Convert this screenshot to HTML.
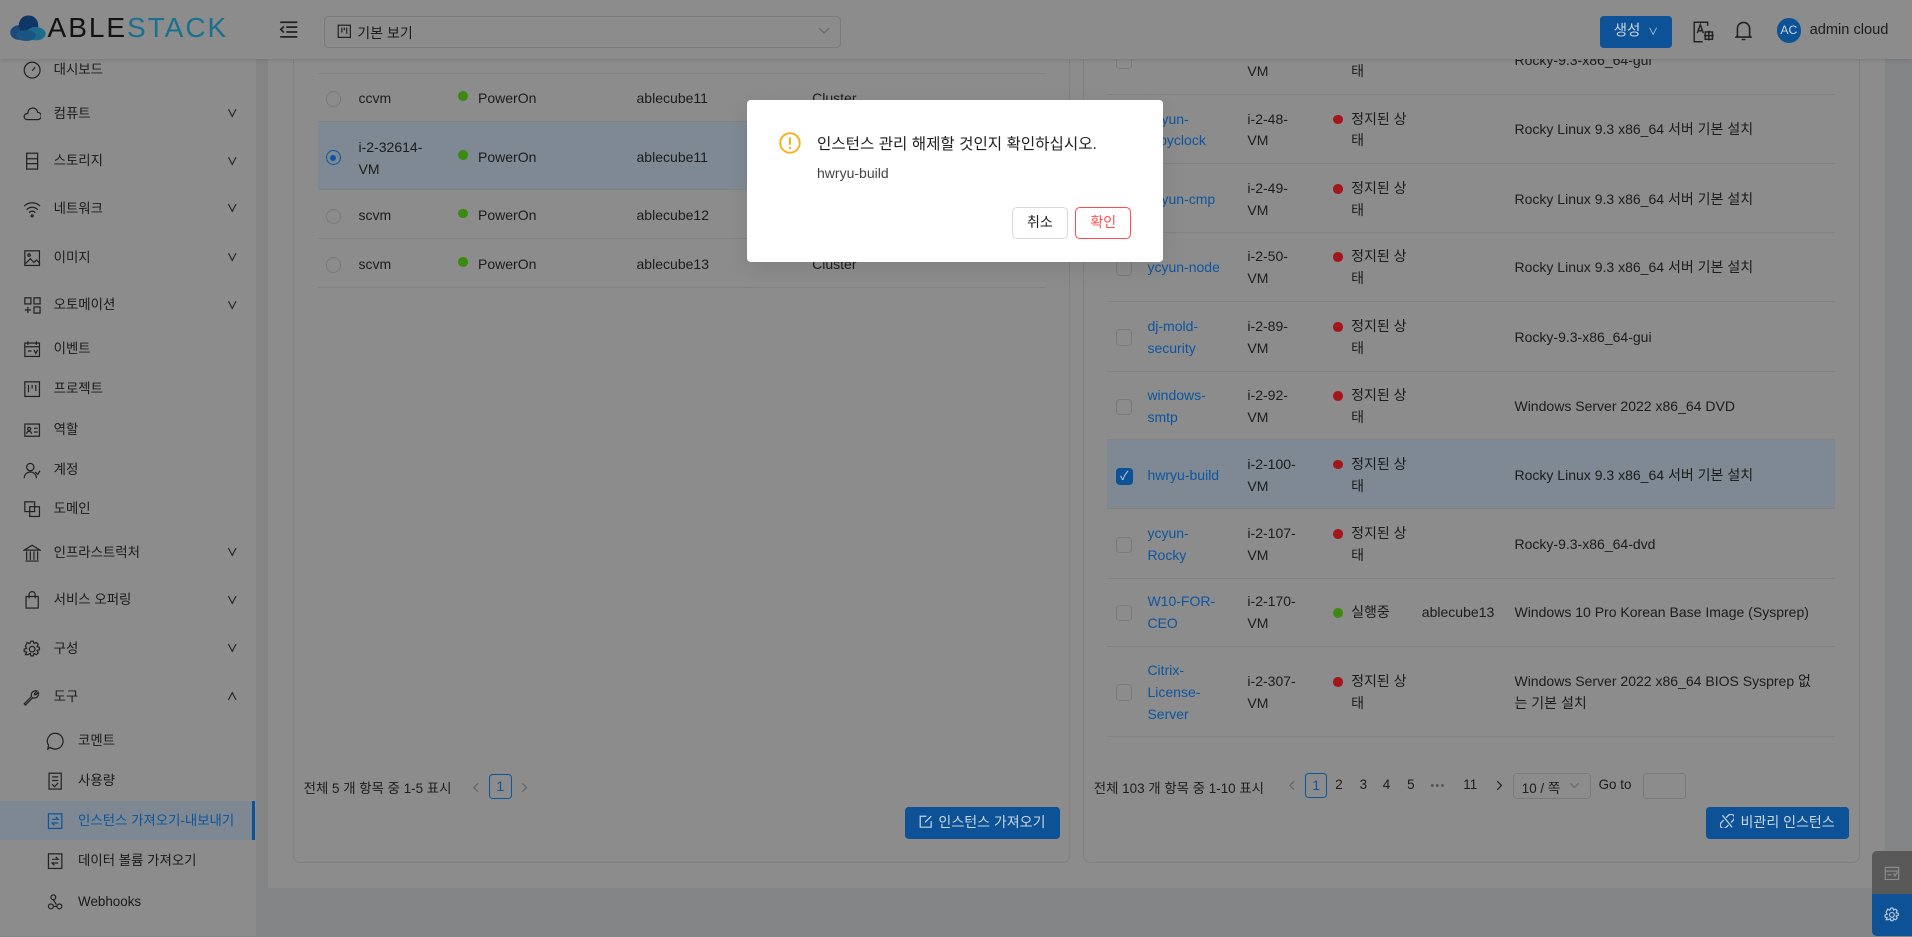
<!DOCTYPE html>
<html><head><meta charset="utf-8">
<style>
html,body{margin:0;padding:0;}
body{width:1568px;height:768px;zoom:1.219388;position:relative;overflow:hidden;background:#838486;font-family:"Liberation Sans","Noto Sans CJK KR",sans-serif;font-size:11.5px;color:#1c1c1c;}
.a{position:absolute;white-space:nowrap;}
.hdr{position:absolute;left:0;top:0;width:1568px;height:48px;background:#8c8c8c;box-shadow:0 1px 3px rgba(0,0,0,.12);z-index:5;}
.side{position:absolute;left:0;top:48px;width:210px;height:720px;background:#8c8c8c;z-index:4;}
.mi{position:absolute;left:0;width:210px;height:32px;line-height:32px;}
.mi .t{position:absolute;left:44px;top:0;font-size:11px;color:#1a1a1a;}
.mi svg{position:absolute;left:19px;top:9px;}
.mi .ch{position:absolute;left:186px;top:1px;font-size:9px;font-weight:bold;color:#222;}
.sub .t{left:64px;}
.sub svg{left:38px;}
.panel{position:absolute;left:220px;top:48px;width:1326px;height:680px;background:#8c8c8c;}
.card{position:absolute;top:0;height:659px;border:1px solid #7f7f7f;border-top:none;border-radius:0 0 6px 6px;background:#8c8c8c;}
.row{position:absolute;border-bottom:1px solid #818181;}
.sel{background:#7e8993;}
.dot{position:absolute;width:8px;height:8px;border-radius:50%;}
.red{background:#a3161c;}.grn{background:#3c8a12;}
.lk{color:#0d559f;}
.btn{position:absolute;background:#0d5296;color:#c9d5e3;border-radius:3px;text-align:center;font-size:11.5px;}
.cb{position:absolute;width:12px;height:12px;border:1px solid #7a7a7a;border-radius:3px;background:#8c8c8c;}
.overlay-dlg{position:absolute;left:613px;top:82px;width:341px;height:133px;background:#fff;border-radius:3px;z-index:10;box-shadow:0 6px 16px rgba(0,0,0,.08);}
.pg{position:absolute;top:637px;font-size:11px;color:#1c1c1c;}
#lt .a,#rt .a{margin-top:1px;}
</style></head><body>

<!-- header -->
<div class="hdr">
  <svg class="a" style="left:7px;top:11px" width="32" height="24" viewBox="0 0 32 24">
    <ellipse cx="8" cy="16" rx="7" ry="6" fill="#1d4a78"/>
    <circle cx="16" cy="10" r="8" fill="#0e3766"/>
    <ellipse cx="22" cy="17" rx="8" ry="5.5" fill="#1c6b8c"/>
    <ellipse cx="14" cy="18.5" rx="8" ry="4.5" fill="#1a5582"/>
  </svg>
  <div class="a" style="left:39px;top:10px;font-size:23px;letter-spacing:1.6px;line-height:26px;"><span style="color:#121212">ABLE</span><span style="color:#19718e">STACK</span></div>
  <svg class="a" style="left:229px;top:17px" width="16" height="14" viewBox="0 0 16 14" stroke="#222" stroke-width="1.4" fill="none"><path d="M1 1h14M6 5h9M6 9h9M1 13h14M4 4.5L1.5 7 4 9.5"/></svg>
  <div class="a" style="left:266px;top:13px;width:422px;height:25px;border:1px solid #7a7a7a;border-radius:4px;background:#8c8c8c;"></div>
  <svg class="a" style="left:276px;top:20px" width="12" height="12" viewBox="0 0 12 12" stroke="#222" fill="none"><rect x="1" y="1" width="10" height="10"/><path d="M4 3v4M6 3v2M8 3v5"/></svg>
  <div class="a" style="left:293px;top:19px;color:#1c1c1c;font-size:11.5px;">기본 보기</div>
  <svg class="a" style="left:671px;top:22px" width="10" height="7" viewBox="0 0 10 7" stroke="#6b6b6b" fill="none"><path d="M1 1l4 4 4-4"/></svg>
  <div class="btn" style="left:1312px;top:13px;width:59px;height:26px;line-height:26px;font-size:12px">생성 <span style="font-size:8px;margin-left:3px">∨</span></div>
  <svg class="a" style="left:1388px;top:17px" width="18" height="18" viewBox="0 0 18 18" stroke="#222" fill="none" stroke-width="1.2"><path d="M12 4V1H1v16h7"/><path d="M3.5 10L6 3l2.5 7M4.4 8h3.2"/><rect x="10" y="9" width="6" height="6"/><path d="M13 8v8M9 12h8"/></svg>
  <svg class="a" style="left:1423px;top:16px" width="14" height="18" viewBox="0 0 14 18" stroke="#222" fill="none" stroke-width="1.3"><path d="M2 13V7a5 5 0 0 1 10 0v6l1 1H1z M5.5 16h3"/></svg>
  <div class="a" style="left:1457px;top:15px;width:20px;height:20px;border-radius:50%;background:#0d5296;color:#c9d5e3;font-size:10px;line-height:20px;text-align:center;">AC</div>
  <div class="a" style="left:1484px;top:18px;font-size:12px;color:#1c1c1c;">admin cloud</div>
</div>

<!-- sidebar -->
<div class="side">
  <div class="mi" style="top:-7px"><svg width="15" height="15" viewBox="0 0 15 15" stroke="#222" fill="none"><circle cx="7.5" cy="7.5" r="6.5"/><path d="M7.5 8l2.5-3"/></svg><span class="t">대시보드</span></div>
  <div class="mi" style="top:29px"><svg width="15" height="15" viewBox="0 0 15 15" stroke="#222" fill="none"><path d="M3 12h9a3 3 0 0 0 0-6 4 4 0 0 0-8 1 2.5 2.5 0 0 0-1 5z"/></svg><span class="t">컴퓨트</span><span class="ch">∨</span></div>
  <div class="mi" style="top:68px"><svg width="15" height="15" viewBox="0 0 15 15" stroke="#222" fill="none"><rect x="3" y="1" width="9" height="13"/><path d="M3 5.5h9M3 9.5h9"/></svg><span class="t">스토리지</span><span class="ch">∨</span></div>
  <div class="mi" style="top:107px"><svg width="15" height="15" viewBox="0 0 15 15" stroke="#222" fill="none"><path d="M1 5a9 9 0 0 1 13 0M3 8a6 6 0 0 1 9 0M5 10.5a3 3 0 0 1 5 0"/><circle cx="7.5" cy="13" r=".8"/></svg><span class="t">네트워크</span><span class="ch">∨</span></div>
  <div class="mi" style="top:147px"><svg width="15" height="15" viewBox="0 0 15 15" stroke="#222" fill="none"><rect x="1.5" y="1.5" width="12" height="12"/><path d="M2 12l4-4 3 3 2-2 3 3"/><circle cx="5" cy="5" r="1"/></svg><span class="t">이미지</span><span class="ch">∨</span></div>
  <div class="mi" style="top:186px"><svg width="15" height="15" viewBox="0 0 15 15" stroke="#222" fill="none"><rect x="1.5" y="1.5" width="5" height="5"/><rect x="9" y="1.5" width="5" height="5"/><rect x="9" y="9" width="5" height="5"/><path d="M4 9v5M1.5 11.5h5"/></svg><span class="t">오토메이션</span><span class="ch">∨</span></div>
  <div class="mi" style="top:222px"><svg width="15" height="15" viewBox="0 0 15 15" stroke="#222" fill="none"><rect x="1.5" y="2.5" width="12" height="11"/><path d="M1.5 5.5h12M4 1v3M11 1v3M4 9h3M9 8l1.5 3 1.5-3"/></svg><span class="t">이벤트</span></div>
  <div class="mi" style="top:255px"><svg width="15" height="15" viewBox="0 0 15 15" stroke="#222" fill="none"><rect x="1.5" y="1.5" width="12" height="12"/><path d="M4.5 4v6M7.5 4v3M10.5 4v5"/></svg><span class="t">프로젝트</span></div>
  <div class="mi" style="top:288px"><svg width="15" height="15" viewBox="0 0 15 15" stroke="#222" fill="none"><rect x="1.5" y="2.5" width="12" height="10"/><circle cx="5" cy="6.5" r="1.3"/><path d="M3 10.5a2 2 0 0 1 4 0M9 6h3M9 9h3"/></svg><span class="t">역할</span></div>
  <div class="mi" style="top:321px"><svg width="15" height="15" viewBox="0 0 15 15" stroke="#222" fill="none"><circle cx="6" cy="5" r="3"/><path d="M1 14a5 5 0 0 1 10 0M10 9l2 2 2-3"/></svg><span class="t">계정</span></div>
  <div class="mi" style="top:353px"><svg width="15" height="15" viewBox="0 0 15 15" stroke="#222" fill="none"><rect x="1.5" y="1.5" width="8" height="8"/><rect x="5.5" y="5.5" width="8" height="8"/></svg><span class="t">도메인</span></div>
  <div class="mi" style="top:389px"><svg width="15" height="15" viewBox="0 0 15 15" stroke="#222" fill="none"><path d="M1 5l6.5-4 6.5 4zM2 14h11M3 6v7M6 6v7M9 6v7M12 6v7"/></svg><span class="t">인프라스트럭처</span><span class="ch">∨</span></div>
  <div class="mi" style="top:428px"><svg width="15" height="15" viewBox="0 0 15 15" stroke="#222" fill="none"><rect x="2.5" y="4.5" width="10" height="9.5"/><path d="M5 6V3a2.5 2.5 0 0 1 5 0v3"/></svg><span class="t">서비스 오퍼링</span><span class="ch">∨</span></div>
  <div class="mi" style="top:468px"><svg width="15" height="15" viewBox="0 0 15 15" stroke="#222" fill="none"><circle cx="7.5" cy="7.5" r="2.3"/><path d="M6.5 1h2l.5 2 2-1 1.5 1.5-1 2 2 .5v2l-2 .5 1 2-1.5 1.5-2-1-.5 2h-2l-.5-2-2 1L2 12l1-2-2-.5v-2l2-.5-1-2L3.5 2l2 1z"/></svg><span class="t">구성</span><span class="ch">∨</span></div>
  <div class="mi" style="top:507px"><svg width="15" height="15" viewBox="0 0 15 15" stroke="#222" fill="none"><path d="M2 14l6-6a3.5 3.5 0 0 0 4.5-4.5L10.5 5.5 9.5 5.5 9.5 4.5 11.5 2.5A3.5 3.5 0 0 0 7 7l-6 6z"/></svg><span class="t">도구</span><span class="ch">∧</span></div>
  <div class="mi sub" style="top:543px"><svg width="15" height="15" viewBox="0 0 15 15" stroke="#222" fill="none"><path d="M7.5 1a6.5 6.5 0 1 1-4 11.6L1.5 14l.6-3A6.5 6.5 0 0 1 7.5 1z"/><path d="M4.5 7.5h.1M7.5 7.5h.1M10.5 7.5h.1" stroke-width="1.5"/></svg><span class="t">코멘트</span></div>
  <div class="mi sub" style="top:576px"><svg width="15" height="15" viewBox="0 0 15 15" stroke="#222" fill="none"><rect x="2.5" y="1" width="10" height="13"/><path d="M5 4h5M5 7h5M5 10l2 2 3-3"/></svg><span class="t">사용량</span></div>
  <div class="mi sub" style="top:609px;background:#7d8893;border-right:3px solid #0d5296;width:207px;"><svg width="15" height="15" viewBox="0 0 15 15" stroke="#0d559f" fill="none"><rect x="2" y="1.5" width="11" height="12"/><path d="M5 6h5l-2-2M10 9H5l2 2"/></svg><span class="t" style="color:#0d559f">인스턴스 가져오기-내보내기</span></div>
  <div class="mi sub" style="top:642px"><svg width="15" height="15" viewBox="0 0 15 15" stroke="#222" fill="none"><rect x="2" y="1.5" width="11" height="12"/><path d="M5 6h5l-2-2M10 9H5l2 2"/></svg><span class="t">데이터 볼륨 가져오기</span></div>
  <div class="mi sub" style="top:675px"><svg width="15" height="15" viewBox="0 0 15 15" stroke="#222" fill="none"><circle cx="6" cy="3.5" r="2"/><circle cx="4" cy="11" r="2"/><circle cx="11" cy="11" r="2"/><path d="M6 5.5l2.5 4M6 11h3"/></svg><span class="t">Webhooks</span></div>
</div>

<!-- content panel -->
<div class="panel">
  <div class="card" style="left:20px;width:636px;">
    <div class="a" style="left:20px;top:12px;width:597px;border-top:1px solid #818181"></div>
    <div class="row" style="left:20px;top:12px;width:597px;height:39px;"></div>
    <div class="row sel" style="left:20px;top:52px;width:597px;height:55px;"></div>
    <div class="row" style="left:20px;top:108px;width:597px;height:39px;"></div>
    <div class="row" style="left:20px;top:148px;width:597px;height:39px;"></div>
  </div>
  <div class="card" style="left:668px;width:636px;"></div>
</div>

<div id="lt">
  <div class="a" style="left:267px;top:74px;width:11px;height:11px;border:1px solid #7a7a7a;border-radius:50%"></div>
  <div class="a" style="left:294px;top:73px;">ccvm</div>
  <div class="dot grn" style="left:376px;top:75px"></div><div class="a" style="left:392px;top:73px;">PowerOn</div>
  <div class="a" style="left:522px;top:73px;">ablecube11</div>
  <div class="a" style="left:666px;top:73px;">Cluster</div>

  <div class="a" style="left:267px;top:122px;width:11px;height:11px;border:1px solid #0d559f;border-radius:50%;"><div style="margin:3px;width:5px;height:5px;border-radius:50%;background:#0d559f"></div></div>
  <div class="a" style="left:294px;top:111px;line-height:18px;">i-2-32614-<br>VM</div>
  <div class="dot grn" style="left:376px;top:123px"></div><div class="a" style="left:392px;top:121px;">PowerOn</div>
  <div class="a" style="left:522px;top:121px;">ablecube11</div>

  <div class="a" style="left:267px;top:170px;width:11px;height:11px;border:1px solid #7a7a7a;border-radius:50%"></div>
  <div class="a" style="left:294px;top:169px;">scvm</div>
  <div class="dot grn" style="left:376px;top:171px"></div><div class="a" style="left:392px;top:169px;">PowerOn</div>
  <div class="a" style="left:522px;top:169px;">ablecube12</div>

  <div class="a" style="left:267px;top:210px;width:11px;height:11px;border:1px solid #7a7a7a;border-radius:50%"></div>
  <div class="a" style="left:294px;top:209px;">scvm</div>
  <div class="dot grn" style="left:376px;top:211px"></div><div class="a" style="left:392px;top:209px;">PowerOn</div>
  <div class="a" style="left:522px;top:209px;">ablecube13</div>
  <div class="a" style="left:666px;top:209px;">Cluster</div>

  <div class="pg" style="left:249px;">전체 5 개 항목 중 1-5 표시</div>
  <svg class="a" style="left:387px;top:640px" width="6" height="9" viewBox="0 0 6 9" stroke="#666" fill="none"><path d="M5 1L1.5 4.5 5 8"/></svg>
  <div class="a" style="left:401px;top:634px;width:17px;height:19px;border:1px solid #0d559f;border-radius:3px;text-align:center;line-height:19px;color:#0d559f;">1</div>
  <svg class="a" style="left:427px;top:640px" width="6" height="9" viewBox="0 0 6 9" stroke="#666" fill="none"><path d="M1 1l3.5 3.5L1 8"/></svg>
  <div class="btn" style="left:742px;top:662px;width:127px;height:26px;line-height:26px;">
    <svg width="11" height="11" viewBox="0 0 11 11" stroke="#c9d5e3" fill="none" style="vertical-align:-1px;margin-right:5px"><path d="M6 1H1v9h9V5M5 6l5-5"/></svg>인스턴스 가져오기</div>
</div>

<div class="row" style="left:908px;top:21px;width:597px;height:56px;"></div>
<div class="row" style="left:908px;top:78px;width:597px;height:56px;"></div>
<div class="row" style="left:908px;top:135px;width:597px;height:55px;"></div>
<div class="row" style="left:908px;top:191px;width:597px;height:56px;"></div>
<div class="row" style="left:908px;top:248px;width:597px;height:56px;"></div>
<div class="row" style="left:908px;top:305px;width:597px;height:55px;"></div>
<div class="row sel" style="left:908px;top:361px;width:597px;height:56px;"></div>
<div class="row" style="left:908px;top:418px;width:597px;height:56px;"></div>
<div class="row" style="left:908px;top:475px;width:597px;height:55px;"></div>
<div class="row" style="left:908px;top:531px;width:597px;height:73px;"></div>

<div id="rt" style="line-height:18px;">
  <div class="cb" style="left:915px;top:43px"></div>
  <div class="a lk" style="left:941px;top:31px;">dj-build</div>
  <div class="a" style="left:1023px;top:31px;">i-2-46-<br>VM</div>
  <div class="dot red" style="left:1093px;top:37px"></div><div class="a" style="left:1108px;top:31px;">정지된 상<br>태</div>
  <div class="a" style="left:1242px;top:40px;">Rocky-9.3-x86_64-gui</div>

  <div class="cb" style="left:915px;top:100px"></div>
  <div class="a lk" style="left:941px;top:88px;">ycyun-<br>ntpyclock</div>
  <div class="a" style="left:1023px;top:88px;">i-2-48-<br>VM</div>
  <div class="dot red" style="left:1093px;top:94px"></div><div class="a" style="left:1108px;top:88px;">정지된 상<br>태</div>
  <div class="a" style="left:1242px;top:97px;">Rocky Linux 9.3 x86_64 서버 기본 설치</div>

  <div class="cb" style="left:915px;top:157px"></div>
  <div class="a lk" style="left:941px;top:154px;">ycyun-cmp</div>
  <div class="a" style="left:1023px;top:145px;">i-2-49-<br>VM</div>
  <div class="dot red" style="left:1093px;top:151px"></div><div class="a" style="left:1108px;top:145px;">정지된 상<br>태</div>
  <div class="a" style="left:1242px;top:154px;">Rocky Linux 9.3 x86_64 서버 기본 설치</div>

  <div class="cb" style="left:915px;top:213px"></div>
  <div class="a lk" style="left:941px;top:210px;">ycyun-node</div>
  <div class="a" style="left:1023px;top:201px;">i-2-50-<br>VM</div>
  <div class="dot red" style="left:1093px;top:207px"></div><div class="a" style="left:1108px;top:201px;">정지된 상<br>태</div>
  <div class="a" style="left:1242px;top:210px;">Rocky Linux 9.3 x86_64 서버 기본 설치</div>

  <div class="cb" style="left:915px;top:270px"></div>
  <div class="a lk" style="left:941px;top:258px;">dj-mold-<br>security</div>
  <div class="a" style="left:1023px;top:258px;">i-2-89-<br>VM</div>
  <div class="dot red" style="left:1093px;top:264px"></div><div class="a" style="left:1108px;top:258px;">정지된 상<br>태</div>
  <div class="a" style="left:1242px;top:267px;">Rocky-9.3-x86_64-gui</div>

  <div class="cb" style="left:915px;top:327px"></div>
  <div class="a lk" style="left:941px;top:315px;">windows-<br>smtp</div>
  <div class="a" style="left:1023px;top:315px;">i-2-92-<br>VM</div>
  <div class="dot red" style="left:1093px;top:321px"></div><div class="a" style="left:1108px;top:315px;">정지된 상<br>태</div>
  <div class="a" style="left:1242px;top:324px;">Windows Server 2022 x86_64 DVD</div>

  <div class="a" style="left:915px;top:383px;width:14px;height:14px;border-radius:3px;background:#0d5296;color:#c9d5e3;font-size:10px;line-height:14px;text-align:center;">✓</div>
  <div class="a lk" style="left:941px;top:380px;">hwryu-build</div>
  <div class="a" style="left:1023px;top:371px;">i-2-100-<br>VM</div>
  <div class="dot red" style="left:1093px;top:377px"></div><div class="a" style="left:1108px;top:371px;">정지된 상<br>태</div>
  <div class="a" style="left:1242px;top:380px;">Rocky Linux 9.3 x86_64 서버 기본 설치</div>

  <div class="cb" style="left:915px;top:440px"></div>
  <div class="a lk" style="left:941px;top:428px;">ycyun-<br>Rocky</div>
  <div class="a" style="left:1023px;top:428px;">i-2-107-<br>VM</div>
  <div class="dot red" style="left:1093px;top:434px"></div><div class="a" style="left:1108px;top:428px;">정지된 상<br>태</div>
  <div class="a" style="left:1242px;top:437px;">Rocky-9.3-x86_64-dvd</div>

  <div class="cb" style="left:915px;top:496px"></div>
  <div class="a lk" style="left:941px;top:484px;">W10-FOR-<br>CEO</div>
  <div class="a" style="left:1023px;top:484px;">i-2-170-<br>VM</div>
  <div class="dot grn" style="left:1093px;top:499px"></div><div class="a" style="left:1108px;top:493px;">실행중</div>
  <div class="a" style="left:1166px;top:493px;">ablecube13</div>
  <div class="a" style="left:1242px;top:493px;">Windows 10 Pro Korean Base Image (Sysprep)</div>

  <div class="cb" style="left:915px;top:561px"></div>
  <div class="a lk" style="left:941px;top:540px;">Citrix-<br>License-<br>Server</div>
  <div class="a" style="left:1023px;top:549px;">i-2-307-<br>VM</div>
  <div class="dot red" style="left:1093px;top:555px"></div><div class="a" style="left:1108px;top:549px;">정지된 상<br>태</div>
  <div class="a" style="left:1242px;top:549px;">Windows Server 2022 x86_64 BIOS Sysprep 없<br>는 기본 설치</div>
</div>

<div class="pg" style="left:897px;">전체 103 개 항목 중 1-10 표시</div>
<svg class="a" style="left:1056px;top:640px" width="6" height="9" viewBox="0 0 6 9" stroke="#666" fill="none"><path d="M5 1L1.5 4.5 5 8"/></svg>
<div class="a" style="left:1070px;top:634px;width:17px;height:19px;border:1px solid #0d559f;border-radius:3px;text-align:center;line-height:19px;color:#0d559f;">1</div>
<div class="pg" style="left:1095px;">2</div>
<div class="pg" style="left:1115px;">3</div>
<div class="pg" style="left:1134px;">4</div>
<div class="pg" style="left:1154px;">5</div>
<div class="pg" style="left:1173px;color:#555;font-size:9px;top:640px;letter-spacing:1px">•••</div>
<div class="pg" style="left:1200px;">11</div>
<svg class="a" style="left:1227px;top:640px" width="6" height="9" viewBox="0 0 6 9" stroke="#222" fill="none"><path d="M1 1l3.5 3.5L1 8"/></svg>
<div class="a" style="left:1241px;top:634px;width:62px;height:20px;border:1px solid #7a7a7a;border-radius:3px;"></div>
<div class="pg" style="left:1248px;">10 / 쪽</div>
<svg class="a" style="left:1287px;top:641px" width="9" height="6" viewBox="0 0 9 6" stroke="#6b6b6b" fill="none"><path d="M1 1l3.5 3.5L8 1"/></svg>
<div class="pg" style="left:1311px;">Go to</div>
<div class="a" style="left:1347px;top:634px;width:34px;height:20px;border:1px solid #7a7a7a;border-radius:3px;"></div>
<div class="btn" style="left:1399px;top:662px;width:117px;height:26px;line-height:26px;">
  <svg width="12" height="12" viewBox="0 0 12 12" stroke="#c9d5e3" fill="none" style="vertical-align:-1px;margin-right:5px"><path d="M5 3l2-2a2.5 2.5 0 0 1 4 4L9 7M7 9l-2 2a2.5 2.5 0 0 1-4-4l2-2M2 1l8 10"/></svg>비관리 인스턴스</div>

<div class="a" style="left:1535px;top:698px;width:33px;height:35px;background:#595959;border-radius:4px 0 0 0;"><svg style="margin:11px 0 0 10px" width="13" height="13" viewBox="0 0 13 13" stroke="#8c8c8c" fill="none"><rect x="1" y="2" width="11" height="10"/><path d="M1 5h11M3 8h3M8 7l1 2 2-3"/></svg></div>
<div class="a" style="left:1535px;top:733px;width:33px;height:35px;background:#0d5296;border-radius:0 0 0 4px;"><svg style="margin:11px 0 0 10px" width="13" height="13" viewBox="0 0 15 15" stroke="#c9d5e3" fill="none"><circle cx="7.5" cy="7.5" r="2.3"/><path d="M6.5 1h2l.5 2 2-1 1.5 1.5-1 2 2 .5v2l-2 .5 1 2-1.5 1.5-2-1-.5 2h-2l-.5-2-2 1L2 12l1-2-2-.5v-2l2-.5-1-2L3.5 2l2 1z"/></svg></div>

<div class="overlay-dlg">
  <svg class="a" style="left:26px;top:26px" width="18" height="18" viewBox="0 0 18 18"><circle cx="9" cy="9" r="8" stroke="#faad14" stroke-width="1.5" fill="none"/><path d="M9 4.5v6" stroke="#faad14" stroke-width="1.6"/><circle cx="9" cy="13" r="1" fill="#faad14"/></svg>
  <div class="a" style="left:57px;top:26px;font-size:12.8px;color:rgba(0,0,0,.88);">인스턴스 관리 해제할 것인지 확인하십시오.</div>
  <div class="a" style="left:57px;top:53px;font-size:11.5px;color:rgba(0,0,0,.75);">hwryu-build</div>
  <div class="a" style="left:217px;top:88px;width:44px;height:24px;border:1px solid #d9d9d9;border-radius:4px;text-align:center;line-height:24px;font-size:11.5px;color:rgba(0,0,0,.88);">취소</div>
  <div class="a" style="left:269px;top:88px;width:44px;height:24px;border:1px solid #ff4d4f;border-radius:4px;text-align:center;line-height:24px;font-size:11.5px;color:#ff4d4f;">확인</div>
</div>
</body></html>
